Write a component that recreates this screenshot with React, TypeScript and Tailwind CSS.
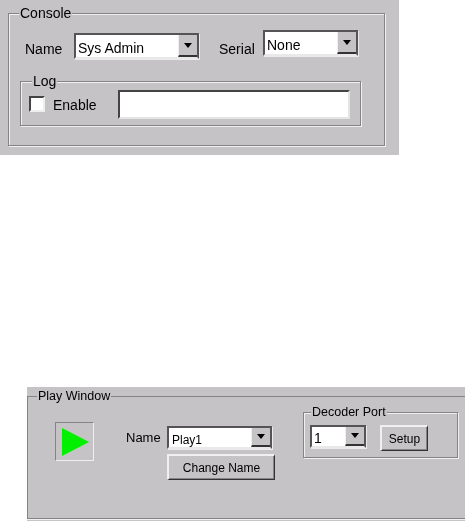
import type { ReactNode } from "react";

const etched = "border border-[#858385] shadow-[1px_1px_0_#f1f0f1,inset_1px_1px_0_#f1f0f1]";

function Combo({ value, className }: { value: string; className: string }) {
  return (
    <div className={`flex items-stretch border-2 border-t-[#555355] border-l-[#555355] border-r-[#555355] border-b-[#e9e8e9] bg-white shadow-[1px_1px_0_#ecebec] ${className}`}>
      <span className="flex flex-1 items-center truncate pl-[2px] pt-[4px] text-black">{value}</span>
      <span className="flex w-[19px] items-center justify-center border-b-2 border-b-[#333] border-l border-l-[#eee] bg-[#c6c3c6]">
        <span className="h-0 w-0 border-x-[4.5px] border-t-[5px] border-x-transparent border-t-black" />
      </span>
    </div>
  );
}

function PushButton({ children, className }: { children: ReactNode; className: string }) {
  return (
    <button className={`border-t-2 border-l-2 border-t-[#f1f0f1] border-l-[#f1f0f1] border-r border-b border-r-[#333] border-b-[#333] bg-[#c6c3c6] text-[12px] text-black shadow-[inset_-1px_-1px_0_#858385] ${className}`}>
      {children}
    </button>
  );
}

function Legend({ children, className }: { children: ReactNode; className: string }) {
  return <legend className={`bg-[#c6c3c6] px-[1px] leading-[14px] text-black ${className}`}>{children}</legend>;
}

export default function App() {
  return (
    <div className="h-[521px] w-[465px] overflow-hidden bg-white text-[14px] blur-[0.35px] font-['Liberation_Sans',Arial,sans-serif]">
      {/* console panel */}
      <div className="h-[155px] w-[399px] bg-[#c6c3c6] pl-[8px] pt-[6px]">
        <fieldset className={`h-[140px] w-[377px] pl-[16px] ${etched}`}>
          <Legend className="-ml-[6px] text-[14px]">Console</Legend>
          <div className="mt-[12px] flex items-start">
            <span className="mt-[7px] w-[49px] text-black">Name</span>
            <Combo value="Sys Admin" className="mt-[1px] h-[26px] w-[125px]" />
            <span className="ml-[20px] mt-[7px] w-[44px] text-black">Serial</span>
            <Combo value="None" className="-mt-[2px] h-[26px] w-[95px]" />
          </div>
          <fieldset className={`-ml-[5px] mt-[14px] flex h-[52px] w-[341px] items-start pl-[8px] pt-[2px] ${etched}`}>
            <Legend className="ml-[3px] text-[14px]">Log</Legend>
            <div className="flex items-start">
              <span className="mt-[6px] h-[16px] w-[16px] border-2 border-t-[#444] border-l-[#444] border-r-[#eee] border-b-[#eee] bg-white" />
              <span className="ml-[8px] mt-[5px] text-black">Enable</span>
              <div className="ml-[21px] h-[29px] w-[232px] border-2 border-t-[#444] border-l-[#444] border-r-[#e6e5e6] border-b-[#e6e5e6] bg-white" />
            </div>
          </fieldset>
        </fieldset>
      </div>

      {/* play window panel */}
      <div className="ml-[27px] mt-[232px] h-[134px] w-[438px] bg-[#c6c3c6] pt-[2px]">
        <fieldset className="h-[130px] border border-r-0 border-[#858385] shadow-[0_1px_0_#f1f0f1]">
          <Legend className="ml-[9px] text-[12.5px]">Play Window</Legend>
          <div className="flex items-start">
            <div className="ml-[27px] mt-[19px] flex h-[39px] w-[39px] items-center border border-t-[#858385] border-l-[#858385] border-r-[#eee] border-b-[#eee] pl-[6px]">
              <svg width="27" height="28" viewBox="0 0 27 28" aria-hidden="true">
                <polygon points="0,0 27,14 0,28" fill="#00f000" />
              </svg>
            </div>
            <div className="ml-[33px] mt-[23px] flex flex-col">
              <div className="flex items-start">
                <span className="-ml-[1px] mt-[2px] w-[41px] text-[13px] text-black">Name</span>
                <Combo value="Play1" className="h-[23px] w-[105px] pl-[1px] text-[12px]" />
              </div>
              <PushButton className="ml-[40px] mt-[5px] h-[26px] w-[108px]">Change Name</PushButton>
            </div>
            <fieldset className={`ml-[28px] mt-[2px] h-[53px] w-[155px] pl-[6px] ${etched}`}>
              <Legend className="ml-[1px] text-[12.5px]">Decoder Port</Legend>
              <div className="flex items-start pt-[6px]">
                <Combo value="1" className="h-[23px] w-[56px]" />
                <PushButton className="ml-[14px] h-[26px] w-[48px]">Setup</PushButton>
              </div>
            </fieldset>
          </div>
        </fieldset>
      </div>
    </div>
  );
}
